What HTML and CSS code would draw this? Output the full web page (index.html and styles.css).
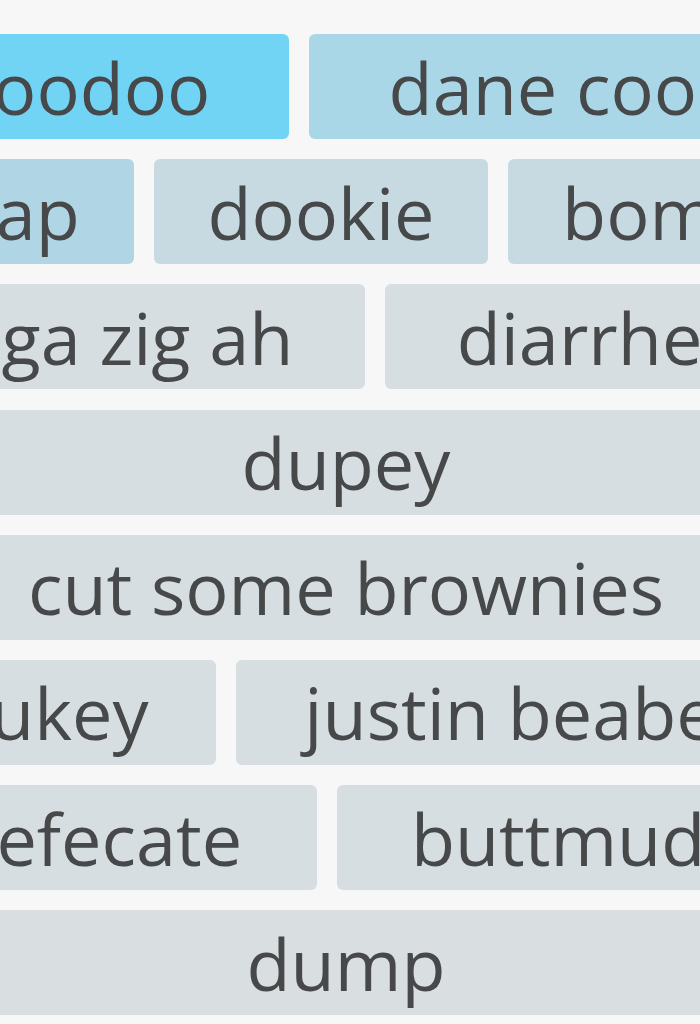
FILE: index.html
```html
<!DOCTYPE html>
<html lang="en">
  <head>
    <meta charset="UTF-8" />
    <meta name="viewport" content="width=device-width, initial-scale=1.0" />
    <title>Word Cloud</title>
    <link rel="stylesheet" href="styles.css">
  </head>
  <body>
    <div class="cloud">
      <div class="row">
        <span class="tag hot">voodoo</span>
        <span class="tag warm">dane cook</span>
      </div>
      <div class="row">
        <span class="tag warm2">crap</span>
        <span class="tag mild">dookie</span>
        <span class="tag mild">bomb</span>
      </div>
      <div class="row">
        <span class="tag">ziga zig ah</span>
        <span class="tag">diarrhea</span>
      </div>
      <div class="row">
        <span class="tag">dupey</span>
      </div>
      <div class="row">
        <span class="tag">cut some brownies</span>
      </div>
      <div class="row">
        <span class="tag">dukey</span>
        <span class="tag">justin beaber</span>
      </div>
      <div class="row">
        <span class="tag">defecate</span>
        <span class="tag">buttmuds</span>
      </div>
      <div class="row">
        <span class="tag cold">dump</span>
      </div>
    </div>
  </body>
</html>
```

FILE: styles.css
```css
body {
  margin: 0;
  background-color: #f7f7f7;
  font-family: "Open Sans", "Noto Sans", sans-serif;
  overflow: hidden;
}

.cloud {
  width: 936px;
  margin: 34px 0 0 -122px;
  display: flex;
  flex-direction: column;
  gap: 20.2px;
}

.row {
  display: flex;
  gap: 20px;
}

.tag {
  flex: 1 1 auto;
  height: 105px;
  display: flex;
  align-items: center;
  justify-content: center;
  white-space: nowrap;
  font-size: 72px;
  color: #464849;
  background-color: #d6dee2;
  border-radius: 6px;
}

.tag.hot {
  background-color: #72d4f5;
}

.tag.warm {
  background-color: #a9d7e8;
}

.tag.warm2 {
  background-color: #b0d5e5;
}

.tag.mild {
  background-color: #c7d9e1;
}

.tag.cold {
  background-color: #d9dfe1;
}
```
